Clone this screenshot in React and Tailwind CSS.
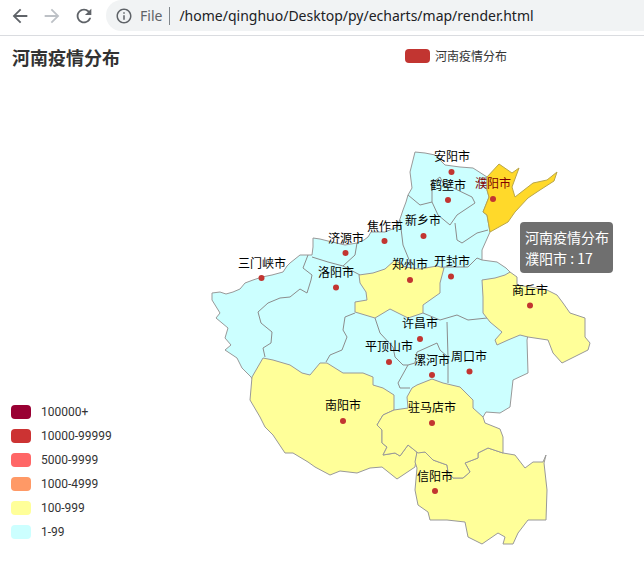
const labelFont = '"Noto Sans CJK SC", "Noto Sans", sans-serif';

const regions = {
  base: "212,293 220,292 226,294 233,292 240,289 245,283 253,280 262,277 272,275 283,272 287,266 290,263 300,255 312,255 313,247 313,238 320,239 328,241 345,245 357,243 364,240 368,237 371,232 385,232 397,227 400,219 403,210 406,202 408,195 412,188 410,172 415,152 425,153 435,155 440,160 445,165 460,167 473,168 487,177 487,190 489,197 483,212 487,215 490,232 482,250 482,260 497,262 506,268 510,272 517,300 528,335 527,340 528,373 513,380 510,407 500,413 486,412 483,417 473,420 400,430 265,400 251,377 242,368 237,358 225,350 231,345 225,338 228,328 216,318 220,313 212,300",
  zhengzhou: "359,275 373,273 385,269 395,260 405,267 420,269 437,266 444,268 440,283 440,293 423,305 423,313 408,318 390,309 375,318 355,312 355,302 367,300 366,292 360,283",
  shangqiu: "482,280 495,278 505,275 510,272 517,277 517,285 530,287 547,290 557,295 563,303 570,313 585,318 585,337 590,343 588,350 578,355 562,363 553,353 548,340 528,337 520,335 508,340 497,345 495,340 502,332 490,322 483,313 483,297",
  puyang: "487,177 499,164 512,173 519,168 512,187 515,197 533,183 547,180 557,172 554,181 540,190 528,198 515,212 508,222 490,232 487,215 483,212 489,197 487,190",
  nanyang: "263,358 273,360 290,365 302,373 310,375 320,363 327,363 343,373 363,373 373,377 373,385 383,388 394,395 394,410 383,415 377,425 382,430 382,443 387,447 383,455 395,453 400,456 408,445 417,452 415,467 403,475 397,479 382,467 370,468 357,473 340,471 330,475 315,467 308,462 293,453 285,453 273,435 265,427 260,417 250,400 252,377",
  zhumadian: "377,425 383,415 394,410 408,408 407,397 412,388 417,385 432,379 443,383 460,387 473,400 473,408 483,417 485,423 500,429 503,437 503,453 488,448 478,453 478,458 465,463 470,472 463,478 453,478 448,472 447,465 433,460 425,452 418,453 408,445 400,456 395,453 383,455 387,447 382,443 382,430",
  xinyang: "417,452 425,452 433,460 447,465 448,472 453,478 463,478 470,472 465,463 478,458 478,453 488,448 503,453 515,455 525,468 533,462 543,462 546,455 544,463 547,490 546,520 528,520 518,533 513,544 503,544 505,537 498,533 482,544 468,537 465,522 447,520 430,520 428,512 418,505 415,490 417,468 415,462",
};

// borders between the cyan cities
const borders = [
  "308,255 303,268 312,275 311,280 307,293 300,289 290,297 280,298 268,303 258,312 261,323 272,332 271,343 263,348 265,357",
  "312,257 328,262 343,266 355,255 357,243",
  "343,266 360,275",
  "355,313 345,317 343,330 347,337 342,350 330,355 326,362",
  "375,318 380,333 393,347 395,357 403,365 408,365 415,363 417,352 437,343 440,350 448,357",
  "408,365 398,383 400,388 410,388",
  "423,313 440,320 457,315 468,320 487,318",
  "447,322 448,357 448,383",
  "400,220 403,245 410,262 405,267",
  "437,268 445,267 468,267 477,258 482,260",
  "408,195 420,205 432,202 438,215 450,225 457,215 475,203 472,197 443,183 440,177 432,183 432,202",
  "455,223 457,240 462,243 477,233 488,230",
];

const cities = [
  ["三门峡市", 261.5, 278, 262, 264],
  ["济源市", 345.5, 253, 346, 239],
  ["焦作市", 384.5, 241, 385, 227],
  ["洛阳市", 336, 287.5, 336, 273],
  ["郑州市", 410, 280, 410, 265],
  ["开封市", 451, 276.5, 452, 262],
  ["新乡市", 423.5, 236, 423, 221],
  ["鹤壁市", 448, 200, 448, 186],
  ["安阳市", 451.5, 172, 452, 157],
  ["濮阳市", 493, 199, 493, 184],
  ["商丘市", 530, 305.5, 530, 291],
  ["许昌市", 420, 339, 420, 324],
  ["平顶山市", 389, 362, 389, 347],
  ["漯河市", 432, 375, 432, 361],
  ["周口市", 469.5, 371.5, 469, 357],
  ["南阳市", 343, 421, 343, 406],
  ["驻马店市", 432, 423, 432, 408],
  ["信阳市", 435, 491, 435, 477],
];

const pieces = [
  { label: "100000+", swatch: "bg-[#990033]" },
  { label: "10000-99999", swatch: "bg-[#cc3333]" },
  { label: "5000-9999", swatch: "bg-[#ff6666]" },
  { label: "1000-4999", swatch: "bg-[#ff9966]" },
  { label: "100-999", swatch: "bg-[#ffff99]" },
  { label: "1-99", swatch: "bg-[#ccffff]" },
];

function Icon({ d, className }) {
  return (
    <svg viewBox="0 0 24 24" className={className} fill="currentColor">
      <path d={d} />
    </svg>
  );
}

function Toolbar() {
  return (
    <div className="h-[36px] border-b border-[#dadce0] bg-white flex items-start overflow-hidden">
      <div className="h-[31px] w-[106px] shrink-0 flex items-center pl-[9px] gap-[10px]">
        <Icon className="w-[22px] h-[22px] text-[#5f6368]" d="M20 11H7.83l5.59-5.59L12 4l-8 8 8 8 1.41-1.41L7.83 13H20v-2z" />
        <Icon className="w-[22px] h-[22px] text-[#bdc1c6]" d="M12 4l-1.41 1.41L16.17 11H4v2h12.17l-5.58 5.59L12 20l8-8z" />
        <Icon className="w-[22px] h-[22px] text-[#5f6368]" d="M17.65 6.35A7.958 7.958 0 0012 4c-4.42 0-7.99 3.58-7.99 8s3.57 8 7.99 8c3.73 0 6.84-2.55 7.73-6h-2.08A5.99 5.99 0 0112 18c-3.31 0-6-2.69-6-6s2.69-6 6-6c1.66 0 3.14.69 4.22 1.78L13 11h7V4l-2.35 2.35z" />
      </div>
      <div className="h-[31px] flex-1 bg-[#f1f3f4] rounded-l-[16px] flex items-center pl-[9px] text-[14px] font-['Noto_Sans',sans-serif] whitespace-nowrap">
        <Icon className="w-[18px] h-[18px] text-[#5f6368]" d="M11 7h2v2h-2zm0 4h2v6h-2zm1-9C6.48 2 2 6.48 2 12s4.48 10 10 10 10-4.48 10-10S17.52 2 12 2zm0 18c-4.41 0-8-3.59-8-8s3.59-8 8-8 8 3.59 8 8-3.59 8-8 8z" />
        <span className="ml-[7px] text-[#5f6368]">File</span>
        <span className="ml-[7px] h-[18px] w-px bg-[#80868b]" />
        <span className="ml-[9px] text-[#202124]">/home/qinghuo/Desktop/py/echarts/map/render.html</span>
      </div>
    </div>
  );
}

function ChinaMap() {
  return (
    <svg viewBox="0 36 644 540" className="absolute inset-0 w-[644px] h-[540px]">
      <polygon points={regions.base} fill="#ccffff" stroke="#999" />
      {borders.map((points) => (
        <polyline key={points} points={points} fill="none" stroke="#8c8c8c" />
      ))}
      <polygon points={regions.zhengzhou} fill="#ffff99" stroke="#999" />
      <polygon points={regions.shangqiu} fill="#ffff99" stroke="#999" />
      <polygon points={regions.nanyang} fill="#ffff99" stroke="#999" />
      <polygon points={regions.xinyang} fill="#ffff99" stroke="#999" />
      <polygon points={regions.zhumadian} fill="#ffff99" stroke="#999" />
      <polygon points={regions.puyang} fill="#ffd92a" stroke="#b9a64a" />
      {cities.map(([name, x, y]) => (
        <circle key={name} cx={x} cy={y} r="3" fill="#c23531" />
      ))}
      {cities.map(([name, , , lx, ly]) => (
        <text
          key={name}
          x={lx}
          y={ly + 4}
          textAnchor="middle"
          fontSize="12"
          fontFamily={labelFont}
          fill={name === "濮阳市" ? "#800000" : "#000"}
        >
          {name}
        </text>
      ))}
    </svg>
  );
}

export default function App() {
  return (
    <div className="w-[644px] h-[576px] bg-white overflow-hidden font-['Noto_Sans_CJK_SC',sans-serif]">
      <Toolbar />
      <div className="relative h-[540px]">
        <ChinaMap />
        <div className="relative h-[369px] flex items-start">
          <h1 className="ml-3 mt-[8px] w-[393px] text-[18px] leading-[26px] font-bold text-[#333]">河南疫情分布</h1>
          <div className="mt-[13px] flex items-center gap-[5px] text-[12px] leading-[14px] text-[#333]">
            <span className="w-[25px] h-[14px] rounded-[4px] bg-[#c23531]" />
            <span>河南疫情分布</span>
          </div>
        </div>
        <div className="relative ml-[11px] flex flex-col gap-[10px] text-[12px] leading-[14px] text-[#333] font-['Roboto',sans-serif]">
          {pieces.map((piece) => (
            <div key={piece.label} className="flex items-center gap-[10px]">
              <span className={`w-[20px] h-[14px] rounded-[4px] ${piece.swatch}`} />
              <span>{piece.label}</span>
            </div>
          ))}
        </div>
        <div className="absolute left-[520px] top-[186px] w-[93px] h-[51px] rounded-[4px] bg-[rgba(50,50,50,0.7)] px-[5px] py-[5px] text-[14px] leading-[21px] text-white whitespace-nowrap">
          <div>河南疫情分布</div>
          <div>濮阳市 : 17</div>
        </div>
      </div>
    </div>
  );
}
